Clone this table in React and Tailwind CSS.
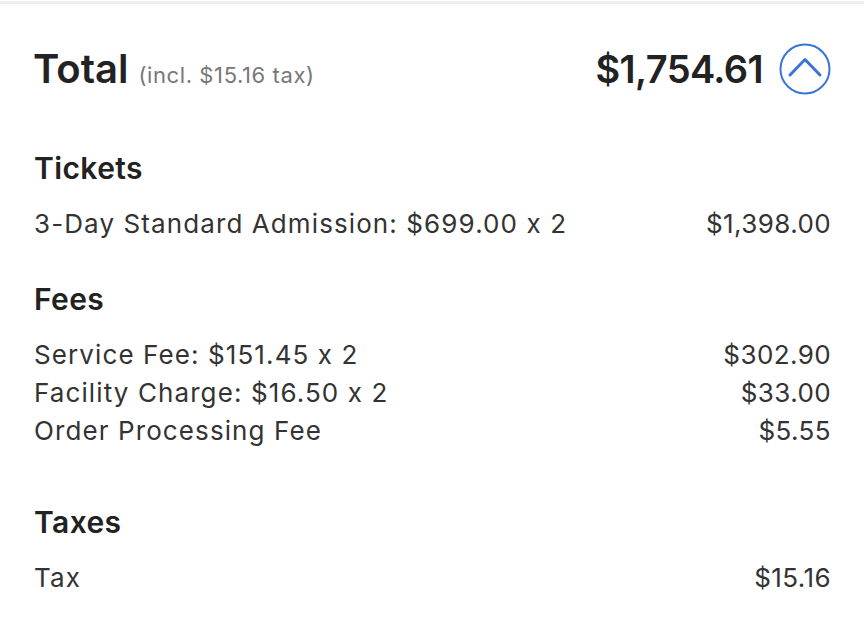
import React from 'react'

const sections = [
  {
    title: 'Tickets',
    gap: 'mt-[56px]',
    rows: [{ label: '3-Day Standard Admission: $699.00 x 2', amount: '$1,398.00' }],
  },
  {
    title: 'Fees',
    gap: 'mt-[38px]',
    rows: [
      { label: 'Service Fee: $151.45 x 2', amount: '$302.90' },
      { label: 'Facility Charge: $16.50 x 2', amount: '$33.00' },
      { label: 'Order Processing Fee', amount: '$5.55' },
    ],
  },
  {
    title: 'Taxes',
    gap: 'mt-[54px]',
    rows: [{ label: 'Tax', amount: '$15.16' }],
  },
]

const ChevronCircle = () => (
  <svg width="52" height="52" viewBox="0 0 52 52" fill="none">
    <circle cx="26" cy="26" r="24.5" stroke="#3b74d8" strokeWidth="2" />
    <path d="M11 32 L26 16.5 L41 32" stroke="#3b74d8" strokeWidth="3" strokeLinecap="round" strokeLinejoin="round" />
  </svg>
)

export default function App() {
  return (
    <div className="h-[643px] overflow-hidden bg-white text-[#2a2a2a] font-['Inter',sans-serif] [font-feature-settings:'calt'_0]">
      <div className="mt-[1px] h-[3px] bg-[#eeeeee]" />

      <div className="mt-[40px] flex h-[50px] items-center justify-between px-[33px]">
        <div className="flex items-baseline gap-[10px]">
          <span className="text-[40px] font-semibold text-[#222]">Total</span>
          <span className="text-[22px] tracking-[0.6px] text-[#777]">(incl. $15.16 tax)</span>
        </div>
        <div className="flex items-center gap-[16px]">
          <span className="text-[38px] font-semibold tracking-[-0.6px] text-[#222]">$1,754.61</span>
          <ChevronCircle />
        </div>
      </div>

      {sections.map((section) => (
        <div key={section.title} className={`${section.gap} px-[34px] pr-[33px]`}>
          <h3 className="h-[36px] text-[30px] font-semibold leading-[36px] tracking-[0.4px] text-[#222]">{section.title}</h3>
          <div className="mt-[19px]">
            {section.rows.map((row) => (
              <div key={row.label} className="flex h-[38px] items-center justify-between text-[26px] leading-[38px] text-[#333]">
                <span className="tracking-[1.1px]">{row.label}</span>
                <span className="tracking-[0.4px]">{row.amount}</span>
              </div>
            ))}
          </div>
        </div>
      ))}
    </div>
  )
}
